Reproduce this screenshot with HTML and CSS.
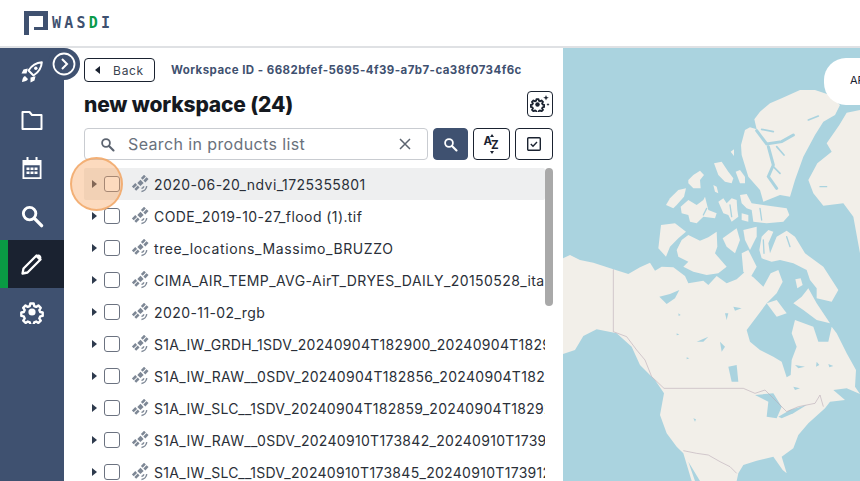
FILE: index.html
```html
<!DOCTYPE html>
<html lang="en">
<head>
<meta charset="utf-8">
<title>WASDI</title>
<link rel="stylesheet" href="styles.css">
</head>
<body>
<svg class="defs" width="0" height="0" aria-hidden="true">
  <symbol id="sat" viewBox="0 0 16 16">
    <g fill="#7d8795">
      <path d="M.8 10.200 3.800 7.200 5.400 8.800 2.400 11.800zM3 12.400 6 9.400 7.600 11 4.600 14z"/>
      <path d="M8.800 2.600 11.600-.2 13.200 1.400 10.400 4.200zM11 4.800 13.800 2 15.600 3.600 12.800 6.600z"/>
      <path d="M5.600 7 8.400 4.200 11.200 7 8.400 9.800z"/>
    </g>
    <path d="M9.300 14.600c2.300-.1 4.400-2.200 4.700-4.700M9.300 11.900c1 0 1.900-.9 2-1.900" fill="none" stroke="#7d8795" stroke-width="1.300"/>
  </symbol>
  <symbol id="gear" viewBox="0 0 24 24">
    <path fill="none" stroke="currentColor" stroke-linejoin="round" d="M10 2h4l.6 3 2.300 1 2.600-1.700 2.800 2.800-1.700 2.600 1 2.300 3 .6v4l-3 .6-1 2.300 1.700 2.600-2.800 2.800-2.600-1.700-2.300 1-.6 3h-4l-.6-3-2.300-1-2.600 1.700-2.800-2.800 1.700-2.600-1-2.300-3-.6v-4l3-.6 1-2.300L1.600 7.100l2.800-2.800L7 6l2.400-1z" transform="translate(1.800 1.800) scale(.85)"/>
    <circle cx="12" cy="12" r="3.600" fill="currentColor"/>
  </symbol>
  <symbol id="mag" viewBox="0 0 20 20">
    <circle cx="8" cy="8" r="5.200" fill="none" stroke="currentColor" stroke-width="2.400"/>
    <path d="m12 12 6 6" stroke="currentColor" stroke-width="2.800" stroke-linecap="round"/>
  </symbol>
</svg>

<header class="topbar">
  <div class="logo">
    <svg class="logo-mark" viewBox="0 0 24 24" aria-hidden="true">
      <path fill="#3f5170" d="M0 0h24v19H10v-3h9V5H5v19H0z"/>
    </svg>
    <span class="logo-word">WAS<span class="logo-d">D</span>I</span>
  </div>
</header>

<div class="app">
  <nav class="sidebar">
    <a class="nav-item">
      <svg class="nav-icon" viewBox="0 0 24 24" aria-hidden="true">
        <path fill="none" stroke="#fff" stroke-width="2" stroke-linejoin="round" d="M21.800 2.200C16 2.500 12 5 8.500 10.500l5 5C19 12 21.500 8 21.800 2.200z"/>
        <circle cx="15.800" cy="8.200" r="1.700" fill="#fff"/>
        <path fill="#fff" d="M7.800 8.500 3.500 9.500 1.500 13.500 6.500 13.500zM15.500 16.200 14.500 20.500 10.500 22.500 10.500 17.500zM5 16c-1.800.8-2.600 2.800-3 6 3.200-.4 5.200-1.200 6-3z"/>
      </svg>
    </a>
    <a class="nav-item">
      <svg class="nav-icon" viewBox="0 0 24 24" aria-hidden="true"><path fill="none" stroke="#fff" stroke-width="2" stroke-linejoin="round" d="M2.500 4h7l2.500 3h9.500v14h-19z"/></svg>
    </a>
    <a class="nav-item">
      <svg class="nav-icon" viewBox="0 0 24 24" aria-hidden="true"><path fill="#fff" d="M6.500 1h2v3H15.500V1h2v3H21.500v19h-19V4h4zM4.300 9.300v11.900h15.400V9.300z"/><path fill="#fff" d="M6.500 11.500h3v2.500h-3zM10.500 11.500h3v2.500h-3zM14.500 11.500h3v2.500h-3zM6.500 15.500h3V18h-3zM10.500 15.500h3V18h-3zM14.500 15.500h3V18h-3z"/></svg>
    </a>
    <a class="nav-item">
      <svg class="nav-icon nav-white" aria-hidden="true"><use href="#mag"/></svg>
    </a>
    <a class="nav-item nav-active">
      <svg class="nav-icon" viewBox="0 0 24 24" aria-hidden="true"><path fill="none" stroke="#fff" stroke-width="2.300" stroke-linejoin="round" d="M3.500 16.500 16.500 3.500l4 4-13 13-5 1z"/><path fill="#fff" d="M15.500 4.500c2-2.500 3.800-2.500 5-1s1.500 3 -1 5z"/></svg>
    </a>
    <a class="nav-item">
      <svg class="nav-icon nav-white" aria-hidden="true"><use href="#gear"/></svg>
    </a>
    <button class="collapse" type="button" aria-label="Expand">
      <svg viewBox="0 0 24 24" aria-hidden="true"><circle cx="12" cy="12" r="10.500" fill="none" stroke="#fff" stroke-width="1.800"/><path d="m10 7 5 5-5 5" fill="none" stroke="#fff" stroke-width="2"/></svg>
    </button>
  </nav>

  <main class="panel">
    <div class="head-row">
      <button class="back" type="button"><span class="back-tri"></span>Back</button>
      <span class="ws-id">Workspace ID - 6682bfef-5695-4f39-a7b7-ca38f0734f6c</span>
    </div>
    <div class="title-row">
      <h1 class="title">new workspace (24)</h1>
      <button class="btn-magic" type="button" aria-label="Apps">
        <svg viewBox="0 0 20 20" aria-hidden="true"><use href="#gear" x="0" y="3" width="15" height="15"/><path fill="#1a2230" d="m16 1 .8 2 2 .8-2 .8-.8 2-.8-2-2-.8 2-.8zM18 9l.5 1 1 .5-1 .5-.5 1-.5-1-1-.5 1-.5z"/></svg>
      </button>
    </div>
    <div class="search-row">
      <label class="search">
        <svg class="search-ico" aria-hidden="true"><use href="#mag"/></svg>
        <span class="search-ph">Search in products list</span>
        <svg class="search-x" viewBox="0 0 12 12" aria-hidden="true"><path d="m1 1 10 10M11 1 1 11" stroke="#5c6470" stroke-width="1.500"/></svg>
      </label>
      <button class="btn btn-go" type="button" aria-label="Search"><svg aria-hidden="true"><use href="#mag"/></svg></button>
      <button class="btn btn-az" type="button">
        <span class="az"><span class="az-a">A</span><span class="az-z">Z</span>
          <svg class="az-arrows" viewBox="0 0 6 20" aria-hidden="true"><path fill="#1a2230" d="M3 0 5 3H1zM3 20 1 17h4z"/></svg>
        </span>
      </button>
      <button class="btn btn-check" type="button" aria-label="Select all">
        <svg viewBox="0 0 16 16" aria-hidden="true"><rect x="1.700" y="1.700" width="12.600" height="12.600" rx="1" fill="none" stroke="#1a2230" stroke-width="1.400"/><path d="m4.800 8 2.200 2.200 4-4.200" fill="none" stroke="#1a2230" stroke-width="1.400"/></svg>
      </button>
    </div>

    <div class="list-wrap">
      <ul class="list">
        <li class="row row-on"><span class="tri"></span><span class="cb"></span><svg class="sat" aria-hidden="true"><use href="#sat"/></svg><span class="name">2020-06-20_ndvi_1725355801</span></li>
        <li class="row"><span class="tri"></span><span class="cb"></span><svg class="sat" aria-hidden="true"><use href="#sat"/></svg><span class="name">CODE_2019-10-27_flood (1).tif</span></li>
        <li class="row"><span class="tri"></span><span class="cb"></span><svg class="sat" aria-hidden="true"><use href="#sat"/></svg><span class="name name-wide">tree_locations_Massimo_BRUZZO</span></li>
        <li class="row"><span class="tri"></span><span class="cb"></span><svg class="sat" aria-hidden="true"><use href="#sat"/></svg><span class="name">CIMA_AIR_TEMP_AVG-AirT_DRYES_DAILY_20150528_italy.tif</span></li>
        <li class="row"><span class="tri"></span><span class="cb"></span><svg class="sat" aria-hidden="true"><use href="#sat"/></svg><span class="name">2020-11-02_rgb</span></li>
        <li class="row"><span class="tri"></span><span class="cb"></span><svg class="sat" aria-hidden="true"><use href="#sat"/></svg><span class="name name-tight">S1A_IW_GRDH_1SDV_20240904T182900_20240904T182925_055</span></li>
        <li class="row"><span class="tri"></span><span class="cb"></span><svg class="sat" aria-hidden="true"><use href="#sat"/></svg><span class="name name-tight">S1A_IW_RAW__0SDV_20240904T182856_20240904T182928_055</span></li>
        <li class="row"><span class="tri"></span><span class="cb"></span><svg class="sat" aria-hidden="true"><use href="#sat"/></svg><span class="name name-tight">S1A_IW_SLC__1SDV_20240904T182859_20240904T182926_055</span></li>
        <li class="row"><span class="tri"></span><span class="cb"></span><svg class="sat" aria-hidden="true"><use href="#sat"/></svg><span class="name name-tight">S1A_IW_RAW__0SDV_20240910T173842_20240910T173914_055</span></li>
        <li class="row"><span class="tri"></span><span class="cb"></span><svg class="sat" aria-hidden="true"><use href="#sat"/></svg><span class="name name-tight">S1A_IW_SLC__1SDV_20240910T173845_20240910T173912_055</span></li>
      </ul>
      <div class="scrollbar"></div>
      <div class="spot"></div>
    </div>
  </main>

  <section class="map">
    <svg class="map-svg" viewBox="9 24 891 1299" aria-hidden="true">
      <g fill="#f2efe9">
        <path d="M9 655 30 645 60 660 100 668 160 688 205 702 240 682 270 668 285 692 305 680 340 682 375 708 385 730 430 722 445 735 470 708 500 730 530 718 555 695 580 712 610 740 632 700 655 690 668 725 650 760 620 790 590 830 560 870 570 905 600 930 640 950 665 965 680 1012 692 1005 695 960 710 920 695 880 705 840 760 860 775 905 805 905 815 860 830 880 860 940 888 990 885 1040 900 1062 860 1045 820 1050 855 1080 810 1085 795 1105 745 1150 715 1185 700 1225 665 1250 680 1300 668 1290 640 1250 590 1262 550 1275 535 1300 530 1323 440 1323 420 1323 385 1265 405 1323 395 1323 370 1240 350 1220 320 1180 300 1125 312 1060 285 1020 240 975 215 920 170 880 110 868 70 888 45 930 9 942Z"/>
        <path d="M583 238 600 215 630 190 665 175 720 150 765 150 810 165 840 195 825 225 790 245 765 285 730 350 705 420 690 470 660 465 610 485 600 450 565 410 545 345 543 315 555 270 570 262 590 268Z"/>
        <path d="M900 210 860 218 838 255 800 310 815 335 772 370 745 420 760 460 790 497 850 490 880 530 900 640Z"/>
        <path d="M318 495 330 475 355 450 378 445 372 470 350 495 340 505Z"/>
        <path d="M362 500 385 480 410 495 430 480 435 470 445 510 470 520 465 535 430 530 410 550 390 545 385 525 365 520Z"/>
        <path d="M385 420 400 405 420 392 432 405 420 420 422 445 400 445 385 430Z"/>
        <path d="M462 370 485 365 505 395 520 415 515 430 495 425 475 405Z"/>
        <path d="M527 395 540 390 555 410 555 430 540 430Z"/>
        <path d="M460 435 470 440 475 460 465 455Z"/>
        <path d="M475 485 490 475 500 490 515 475 530 480 532 510 535 530 515 545 505 525 490 520Z"/>
        <path d="M540 465 560 462 575 490 610 495 680 505 688 525 670 545 620 550 580 545 575 510 560 505 545 490Z"/>
        <path d="M545 520 565 525 565 545 545 540Z"/>
        <path d="M303 555 345 550 378 575 355 595 330 620 318 650 295 625Z"/>
        <path d="M350 630 365 600 385 585 420 602 445 592 470 575 472 620 465 640 500 680 475 700 440 705 400 695 370 680 385 665 355 650Z"/>
        <path d="M488 595 530 565 540 600 525 640 500 620Z"/>
        <path d="M550 570 590 560 590 590 570 630 555 600Z"/>
        <path d="M545 640 565 630 590 680 570 715 550 695Z"/>
        <path d="M598 630 605 590 625 570 640 575 625 610 630 640 650 590 680 572 705 590 735 640 790 680 835 750 815 785 770 775 770 745 750 720 740 690 700 670 660 660 635 665 605 655Z"/>
        <path d="M745 745 770 790 810 850 770 840 730 810 700 790 725 770Z"/>
        <path d="M620 790 650 780 680 820 650 830Z"/>
        <path d="M512 335 522 328 522 348Z"/>
        <path d="M706 718 722 715 728 735 712 745Z"/>
      </g>
      <g fill="none" stroke="#aad3df" stroke-linecap="round">
        <path stroke-width="9" d="M590 272 620 312 665 305 700 285M625 320 640 375 625 410 650 445"/>
        <path stroke-width="5" d="M650 320 672 345M640 380 660 400M745 240 775 228M605 268 640 275M790 260 835 225"/>
        <path stroke-width="4" d="M680 590 690 620M610 600 612 640M440 505 430 525M510 495 515 530M600 505 605 540M780 440 800 440"/>
      </g>
      <g fill="#aad3df">
        <path d="M298 770 330 762 358 750 345 775 320 792Z"/>
        <path d="M410 905 445 890 430 905Z"/>
        <path d="M505 980 530 975 535 1025 515 1025Z"/>
        <path d="M585 1065 640 1060 665 1100 650 1135 620 1130 625 1085Z"/>
        <path d="M655 1130 690 1110 740 1095 700 1120 665 1135Z"/>
        <path d="M400 1135 408 1138 405 1145Z"/>
        <path d="M495 820 505 820 500 840Z"/>
        <path d="M480 905 495 920 485 935Z"/>
        <path d="M705 975 735 980 715 985ZM770 965 778 975 768 980ZM805 972 820 978 808 982ZM355 820 362 825 356 828ZM350 880 358 884 350 886ZM520 800 545 805 525 812ZM380 952 388 955 380 958ZM700 1040 720 1045 705 1050Z"/>
      </g>
      <g fill="none" stroke="#b9a9b4" stroke-width="1.700">
        <path d="M160 688V875L200 890 230 930 255 960 275 1010 312 1045H550L585 1060 615 1050 650 1085 680 1115 715 1100 765 1090 780 1065 790 1100M370 1232 410 1240 445 1245 480 1265 510 1280 530 1300"/>
      </g>
    </svg>
    <div class="map-pill">AF</div>
  </section>
</div>
</body>
</html>
```

FILE: styles.css
```css
* { box-sizing: border-box; }
html, body { margin: 0; height: 100%; overflow: hidden; }
body { font-family: "Inter", "Liberation Sans", sans-serif; background: #fff; color: #1a2230; }
.defs { position: absolute; }
button { font-family: inherit; cursor: pointer; padding: 0; }

.topbar { height: 48px; border-bottom: 2px solid #dfe1e4; display: flex; align-items: center; padding: 0 0 0 24px; }
.logo { display: flex; align-items: center; gap: 4px; }
.logo-mark { width: 24px; height: 24px; display: block; margin-top: -1px; }
.logo-word { font-family: "DejaVu Sans Mono", monospace; font-weight: 700; font-size: 15px; letter-spacing: 3.2px; color: #3f5170; }
.logo-d { color: #0a9a4a; }

.app { display: flex; height: 433px; }
.sidebar { width: 64px; background: #3f5170; position: relative; flex: none; z-index: 2; }
.nav-item { height: 48px; display: flex; align-items: center; justify-content: center; }
.nav-icon { width: 24px; height: 24px; display: block; }
.nav-white { color: #fff; stroke-width: 2.800; }
.nav-active { background: #1a2230; border-left: 8px solid #0a9a44; padding-right: 8px; }
.collapse { position: absolute; left: 48px; top: 0; width: 32px; height: 32px; border-radius: 50%; border: 0; background: #3f5170; padding: 4px; display: flex; }
.collapse svg { width: 24px; height: 24px; }

.panel { width: 499px; flex: none; padding: 10px 10px 0 20px; overflow: hidden; }
.head-row { display: flex; align-items: center; gap: 16px; height: 24px; }
.back { width: 71px; height: 24px; background: #fff; border: 1px solid #1a2230; border-radius: 4px; font-size: 12px; color: #3a4350; display: flex; align-items: center; justify-content: center; gap: 13px; letter-spacing: .7px; }
.back-tri { border-style: solid; border-width: 4px 5px 4px 0; border-color: transparent #1a2230 transparent transparent; }
.ws-id { font-size: 11.500px; font-weight: 700; color: #3f5170; white-space: nowrap; letter-spacing: .44px; }

.title-row { display: flex; align-items: center; justify-content: space-between; margin-top: 9px; height: 26px; }
.title { margin: 0; font-size: 21px; font-weight: 800; color: #15191f; letter-spacing: -.17px; }
.btn-magic { width: 26px; height: 26px; background: #fff; border: 1px solid #1a2230; border-radius: 4px; color: #1a2230; display: flex; align-items: center; justify-content: center; padding: 2px; stroke-width: 3.400; }
.btn-magic svg { width: 20px; height: 20px; }

.search-row { display: flex; margin-top: 11px; height: 32px; gap: 5px; }
.search { width: 344px; height: 32px; border: 1px solid #c9ccd1; border-radius: 4px; display: flex; align-items: center; padding: 0 16px 0 15px; color: #5c6470; }
.search-ico { width: 15px; height: 15px; flex: none; margin-right: 13px; }
.search-ph { font-size: 16px; flex: 1; color: #6a717c; letter-spacing: .38px; }
.search-x { width: 12px; height: 12px; flex: none; }
.btn { height: 32px; border: 1px solid #1a2230; border-radius: 4px; background: #fff; display: flex; align-items: center; justify-content: center; }
.btn-go { width: 35px; background: #3f5170; border-color: #3f5170; color: #fff; }
.btn-go svg { width: 15px; height: 15px; }
.btn-az { width: 37px; }
.az { position: relative; display: flex; width: 16px; height: 20px; font-size: 11.500px; font-weight: 700; color: #1a2230; line-height: 1; }
.az-a { margin-top: 2px; }
.az-z { margin-top: 6px; margin-left: -1px; }
.az-arrows { position: absolute; left: 5px; top: 0; width: 6px; height: 20px; }
.btn-check { width: 38px; }
.btn-check svg { width: 16px; height: 16px; }

.list-wrap { position: relative; margin: 8px 0 0 -20px; height: 320px; padding-left: 20px; }
.list { list-style: none; margin: 0; padding: 0; width: 461px; overflow: hidden; }
.row { height: 32px; display: flex; align-items: center; position: relative; padding-left: 8px; border-radius: 2px; }
.row-on { background: #eeeff0; }
.tri { width: 0; height: 0; border-style: solid; border-width: 4px 0 4px 5px; border-color: transparent transparent transparent #2e3a4d; flex: none; }
.cb { width: 16px; height: 16px; border: 1.500px solid #6b7280; border-radius: 3px; background: #fff; margin-left: 7px; flex: none; }
.sat { width: 18px; height: 18px; margin-left: 11px; flex: none; }
.name { font-size: 14px; color: #2a2f38; margin-left: 5px; white-space: nowrap; letter-spacing: .42px; }
.name-wide { letter-spacing: .6px; }
.name-tight { letter-spacing: .3px; }
.scrollbar { position: absolute; left: 481px; top: 0; width: 8px; height: 138px; background: #a9a9a9; border-radius: 4px; }
.spot { position: absolute; left: 6px; top: -11px; width: 53px; height: 54px; border-radius: 50%; background: rgba(247, 168, 100, .42); border: 2px solid rgba(240, 165, 100, .8); }

.map { flex: 1; background: #aad3df; position: relative; overflow: hidden; }
.map-svg { width: 297px; height: 433px; display: block; }
.map-pill { position: absolute; left: 261px; top: 10px; width: 80px; height: 47px; background: #fff; border-radius: 22px; font-size: 11px; color: #1a2230; padding: 15px 0 0 26px; }
```
